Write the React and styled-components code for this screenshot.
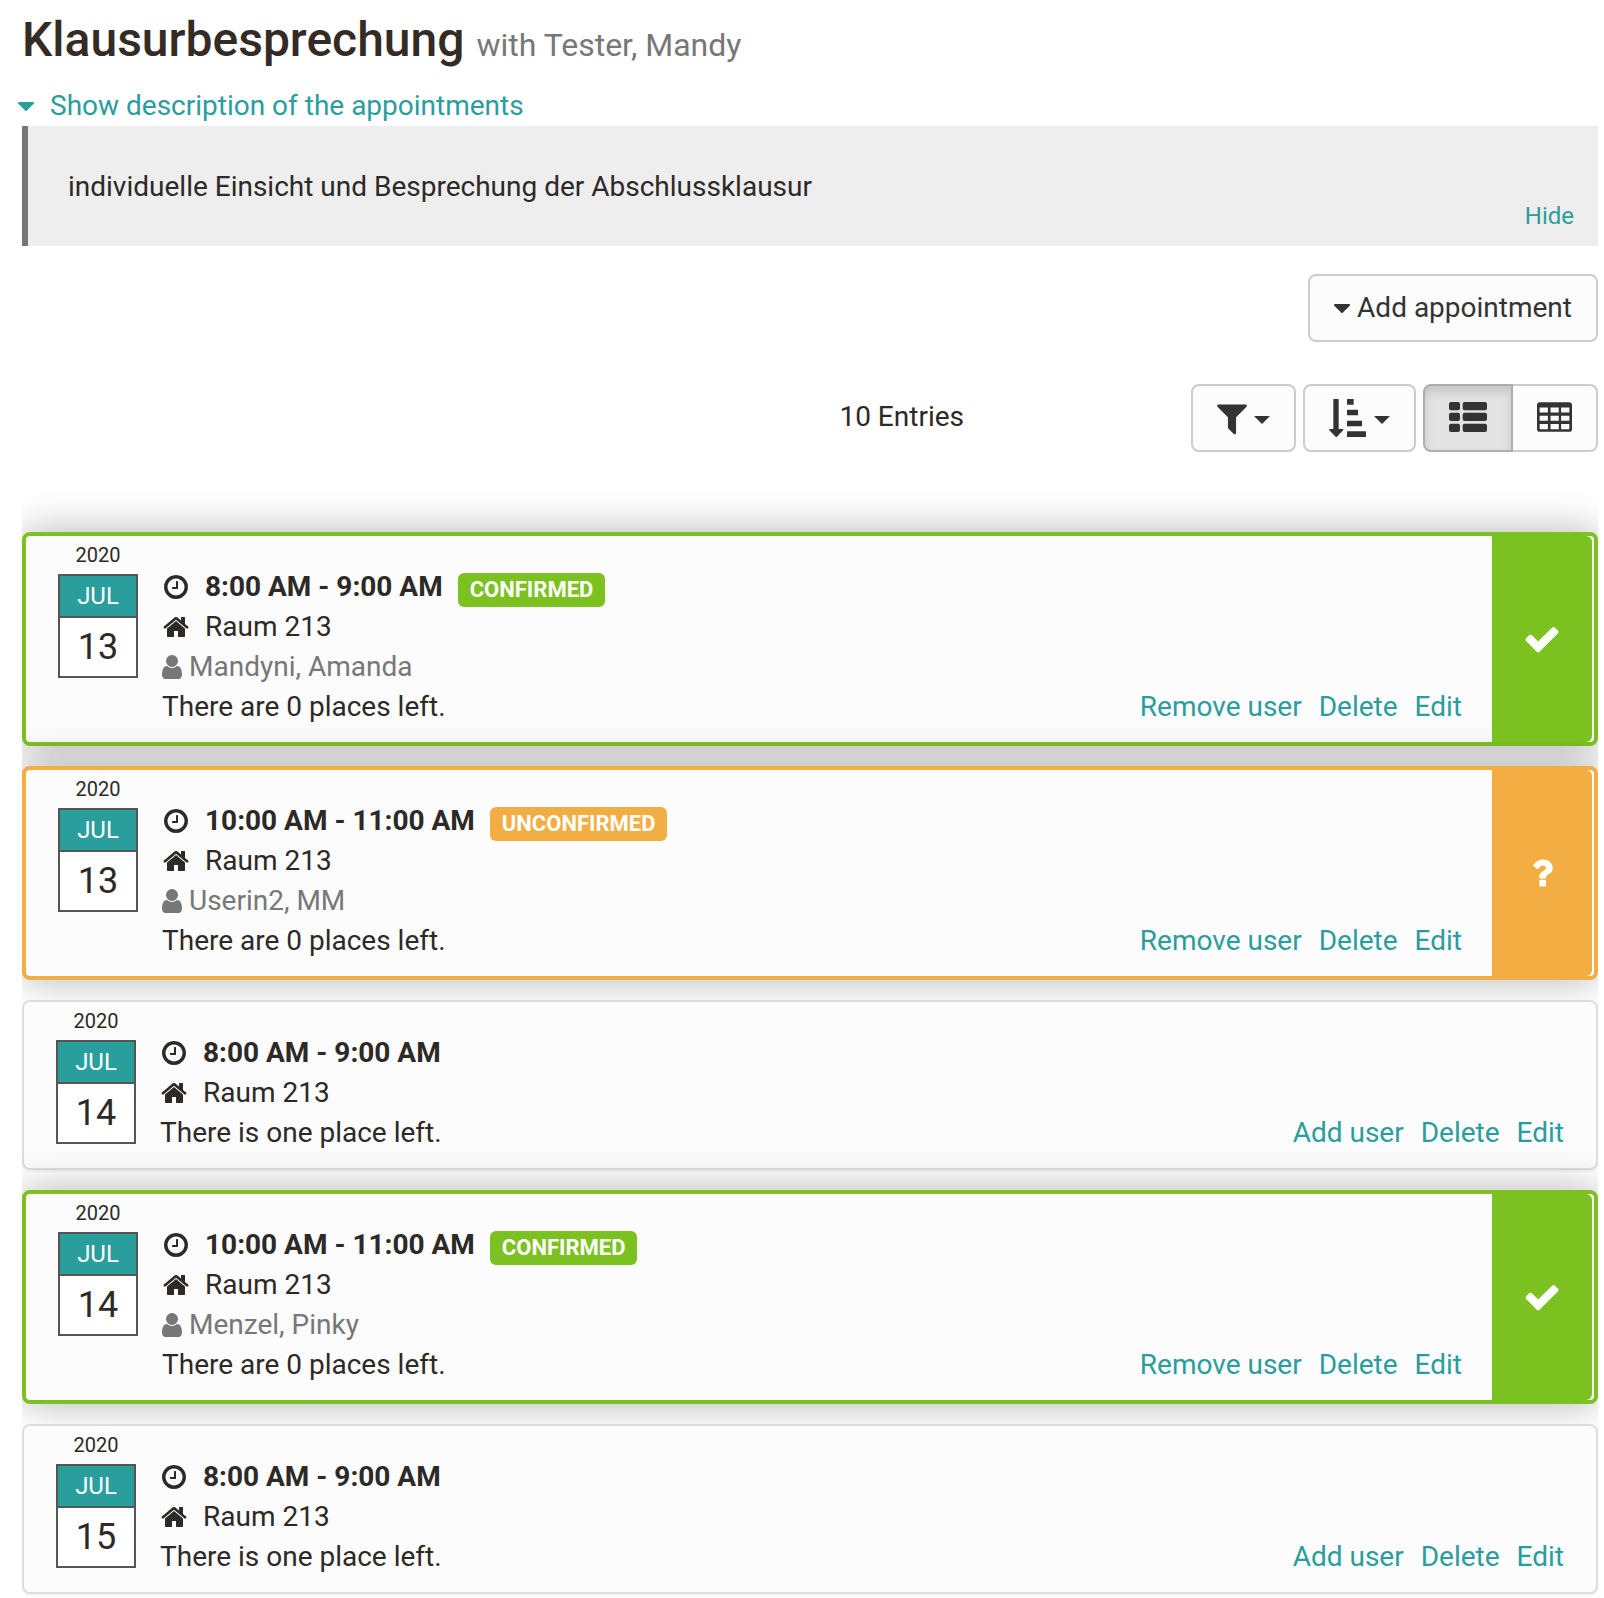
import React, { useState } from "react";
import styled, { createGlobalStyle, css } from "styled-components";

const color = {
  text: "#2d2926",
  title: "#352b25",
  control: "#333333",
  muted: "#777777",
  link: "#2a9d9d",
  confirmed: "#7bc221",
  unconfirmed: "#f2ae43",
  surface: "#fcfcfc",
};

const GlobalStyle = createGlobalStyle`
  *, *::before, *::after { box-sizing: border-box; }
  body {
    margin: 0;
    background: #ffffff;
    color: ${color.text};
    font-family: Roboto, "Liberation Sans", sans-serif;
    font-size: 28px;
    line-height: 40px;
  }
  svg { display: block; flex: none; fill: currentColor; }
`;

/* ---------- icons ---------- */

const Glyph = ({ d, size = 28, left = 0, span = 1792, width }) => (
  <svg width={width || size} height={size} viewBox={`${left} 0 ${span} 1792`} aria-hidden="true">
    <path d={d} />
  </svg>
);

const paths = {
  clock:
    "M1024 544v448q0 14-9 23t-23 9h-320q-14 0-23-9t-9-23v-64q0-14 9-23t23-9h224v-352q0-14 9-23t23-9h64q14 0 23 9t9 23zm416 352q0-148-73-273t-198-198-273-73-273 73-198 198-73 273 73 273 198 198 273 73 273-73 198-198 73-273zm224 0q0 209-103 385.5t-279.5 279.5-385.5 103-385.5-103-279.5-279.5-103-385.5 103-385.5 279.5-279.5 385.5-103 385.5 103 279.5 279.5 103 385.5z",
  home:
    "M1472 992v480q0 26-19 45t-45 19h-384v-384h-256v384h-384q-26 0-45-19t-19-45v-480q0-1 .5-3t.5-3l575-474 575 474q1 2 1 6zm223-69l-62 74q-8 9-21 11h-3q-13 0-21-7l-692-577-692 577q-12 8-24 7-13-2-21-11l-62-74q-8-10-7-23.5t11-21.5l719-599q32-26 76-26t76 26l244 204v-195q0-14 9-23t23-9h192q14 0 23 9t9 23v408l219 182q10 8 11 21.5t-7 23.5z",
  user:
    "M1536 1399q0 109-62.5 187t-150.5 78h-854q-88 0-150.5-78t-62.5-187q0-85 8.5-160.5t31.5-152 58.5-131 94-89 134.5-34.5q131 128 313 128t313-128q76 0 134.5 34.5t94 89 58.5 131 31.5 152 8.5 160.5zm-256-887q0 159-112.5 271.5t-271.5 112.5-271.5-112.5-112.5-271.5 112.5-271.5 271.5-112.5 271.5 112.5 112.5 271.5z",
  filter:
    "M1595 295q17 41-14 70l-493 493v742q0 42-39 59-13 5-25 5-27 0-45-19l-256-256q-19-19-19-45v-486l-493-493q-31-29-14-70 17-39 59-39h1280q42 0 59 39z",
  check:
    "M1671 566q0 40-28 68l-724 724-136 136q-28 28-68 28t-68-28l-136-136-362-362q-28-28-28-68t28-68l136-136q28-28 68-28t68 28l294 295 656-657q28-28 68-28t68 28l136 136q28 28 28 68z",
  question:
    "M1088 1256v240q0 16-12 28t-28 12h-240q-16 0-28-12t-12-28v-240q0-16 12-28t28-12h240q16 0 28 12t12 28zm316-600q0 54-15.5 101t-35 76.5-55 59.5-57.5 43.5-61 35.5q-41 23-68.5 65t-27.5 67q0 17-12 32.5t-28 15.5h-240q-15 0-25.5-18.5t-10.5-37.5v-45q0-83 65-156.5t143-108.5q59-27 84-56t25-76q0-42-46.5-74t-107.5-32q-65 0-108 29-35 25-107 115-13 16-31 16-12 0-25-8l-164-125q-13-10-15.5-25t5.5-28q160-266 464-266 80 0 161 31t146 83 106 127.5 41 158.5z",
  caret:
    "M1408 704q0 26-19 45l-448 448q-19 19-45 19t-45-19l-448-448q-19-19-19-45t19-45 45-19h896q26 0 45 19t19 45z",
};

const CaretIcon = () => <Glyph d={paths.caret} left={384} span={1024} width={16} />;
const UserIcon = () => <Glyph d={paths.user} left={256} span={1280} width={20} />;
const FilterIcon = () => <Glyph d={paths.filter} size={38} left={192} span={1408} width={30} />;

const SortIcon = () => (
  <svg width="37" height="38" viewBox="0 0 111 114" aria-hidden="true">
    <path d="M15 0h12q2 0 2 2v88h12q3 0 2 3L24 113q-2 2-4 0L1 94q-2-4 2-4h10V2q0-2 2-2z" />
    <rect x="54" y="0" width="20" height="17" rx="1" />
    <rect x="54" y="32" width="33" height="17" rx="1" />
    <rect x="54" y="65" width="45" height="17" rx="1" />
    <rect x="54" y="97" width="57" height="17" rx="1" />
  </svg>
);

const ListIcon = () => (
  <svg width="38" height="32" viewBox="0 0 114 96" aria-hidden="true">
    {[0, 32, 65].map((y) => (
      <React.Fragment key={y}>
        <rect x="0" y={y} width="33" height="25" rx="6" />
        <rect x="41" y={y} width="73" height="25" rx="6" />
      </React.Fragment>
    ))}
  </svg>
);

const TableIcon = () => (
  <svg width="35" height="32" viewBox="0 0 106 96" aria-hidden="true">
    <path
      fillRule="evenodd"
      d="M9 0h88q9 0 9 9v72q0 9-9 9H9q-9 0-9-9V9q0-9 9-9z
         M8 16v15h25V16z M41 16v15h25V16z M73 16v15h25V16z
         M8 41v15h25V41z M41 41v15h25V41z M73 41v15h25V41z
         M8 66v14q0 2 2 2h23V66z M41 66v16h25V66z M73 66v16h23q2 0 2-2V66z"
    />
  </svg>
);

/* ---------- page ---------- */

const Page = styled.main`
  padding: 14px 6px 4px 22px;
`;

const Title = styled.h1`
  margin: 0 0 20px;
  color: ${color.title};
  font-size: 48px;
  line-height: 52px;
  font-weight: 500;

  small {
    color: ${color.muted};
    font-size: 32px;
    line-height: 32px;
    font-weight: 400;
  }
`;

const Toggle = styled.button`
  display: flex;
  align-items: center;
  gap: 16px;
  margin: 0 0 0 -4px;
  padding: 0;
  border: 0;
  background: none;
  color: ${color.link};
  font: inherit;
  cursor: pointer;
`;

const Description = styled.section`
  display: flex;
  justify-content: space-between;
  padding: 41px 24px 10px 40px;
  border-left: 6px solid ${color.muted};
  background: #eeeeee;

  p {
    margin: 0 0 29px;
  }
`;

const Link = styled.a`
  color: ${color.link};
  text-decoration: none;
`;

const HideLink = styled(Link)`
  align-self: flex-end;
  font-size: 24px;
`;

const Button = styled.button`
  display: flex;
  align-items: center;
  gap: ${(p) => p.$gap || 8}px;
  height: 68px;
  padding: 0 24px;
  border: 2px solid #cccccc;
  border-radius: 8px;
  background: ${color.surface};
  color: ${color.control};
  font: inherit;
  cursor: pointer;

  ${(p) =>
    p.$active &&
    css`
      z-index: 1;
      border-color: #adadad;
      background: #e3e3e3;
      box-shadow: inset 0 6px 10px rgba(0, 0, 0, 0.125);
    `}
`;

const SmallCaret = styled.span`
  margin-top: 4px;
  border-top: 8px solid currentColor;
  border-right: 8px solid transparent;
  border-left: 8px solid transparent;
`;

const AddRow = styled.div`
  display: flex;
  justify-content: flex-end;
  margin: 28px 0 42px;
`;

const Toolbar = styled.div`
  display: flex;
  align-items: center;
  justify-content: flex-end;
  margin-bottom: 40px;
`;

const Count = styled.span`
  margin-right: 227px;
  padding-bottom: 2px;
`;

const Tools = styled.div`
  display: flex;
  gap: 7px;
`;

const ButtonGroup = styled.div`
  display: flex;

  ${Button}:first-child {
    border-radius: 8px 0 0 8px;
  }
  ${Button}:last-child {
    margin-left: -2px;
    border-radius: 0 8px 8px 0;
  }
`;

/* ---------- appointments ---------- */

const List = styled.ul`
  margin: 0;
  padding: 40px 0 4px;
  overflow: hidden;
  list-style: none;
`;

const Card = styled.li`
  display: flex;
  border: 2px solid #dddddd;
  border-radius: 8px;
  background: ${color.surface};
  box-shadow: 0 2px 2px rgba(0, 0, 0, 0.05);

  & + & {
    margin-top: 20px;
  }

  ${(p) =>
    p.$status &&
    css`
      border: 4px solid ${color[p.$status]};
      box-shadow: 0 0 40px rgba(0, 0, 0, 0.3);
    `}
`;

const DateColumn = styled.div`
  width: 80px;
  margin: 0 24px 0 32px;
  text-align: center;
`;

const Year = styled.div`
  font-size: 20px;
  line-height: 38px;
`;

const Sheet = styled.div`
  border: 2px solid #555555;
  background: #ffffff;
`;

const Month = styled.div`
  border-bottom: 2px solid #555555;
  background: ${color.link};
  color: #ffffff;
  font-size: 24px;
`;

const Day = styled.div`
  font-size: 36px;
  line-height: 58px;
`;

const Details = styled.div`
  flex: 1;
  padding: 31px 0 15px;
`;

const Line = styled.div`
  display: flex;
  align-items: center;
  gap: 15px;
  height: 40px;
`;

const Time = styled.strong`
  font-weight: 700;
`;

const Badge = styled.span`
  align-self: flex-end;
  padding: 0 12px;
  border-radius: 6px;
  background: ${(p) => color[p.$status]};
  color: #ffffff;
  font-size: 22px;
  line-height: 34px;
  font-weight: 700;
  text-transform: uppercase;
`;

const Person = styled(Line)`
  gap: 7px;
  color: ${color.muted};
`;

const Actions = styled.nav`
  display: flex;
  align-self: flex-end;
  gap: 17px;
  padding: 0 ${(p) => (p.$status ? 30 : 32)}px 15px 0;
`;

const StatusPanel = styled.div`
  display: flex;
  align-items: center;
  justify-content: center;
  width: 100px;
  margin-right: 2px;
  border-radius: 0 6px 6px 0;
  background: ${(p) => color[p.$status]};
  color: #ffffff;
`;

const appointments = [
  { day: 13, time: "8:00 AM - 9:00 AM", status: "confirmed", person: "Mandyni, Amanda" },
  { day: 13, time: "10:00 AM - 11:00 AM", status: "unconfirmed", person: "Userin2, MM" },
  { day: 14, time: "8:00 AM - 9:00 AM" },
  { day: 14, time: "10:00 AM - 11:00 AM", status: "confirmed", person: "Menzel, Pinky" },
  { day: 15, time: "8:00 AM - 9:00 AM" },
];

function Appointment({ day, time, status, person }) {
  return (
    <Card $status={status}>
      <DateColumn>
        <Year>2020</Year>
        <Sheet>
          <Month>JUL</Month>
          <Day>{day}</Day>
        </Sheet>
      </DateColumn>
      <Details>
        <Line>
          <Glyph d={paths.clock} />
          <Time>{time}</Time>
          {status && <Badge $status={status}>{status}</Badge>}
        </Line>
        <Line>
          <Glyph d={paths.home} />
          Raum 213
        </Line>
        {person && (
          <Person>
            <UserIcon />
            {person}
          </Person>
        )}
        <Line>{person ? "There are 0 places left." : "There is one place left."}</Line>
      </Details>
      <Actions $status={status}>
        <Link href="#user">{person ? "Remove user" : "Add user"}</Link>
        <Link href="#delete">Delete</Link>
        <Link href="#edit">Edit</Link>
      </Actions>
      {status && (
        <StatusPanel $status={status}>
          <Glyph d={status === "confirmed" ? paths.check : paths.question} size={38} />
        </StatusPanel>
      )}
    </Card>
  );
}

export default function App() {
  const [open, setOpen] = useState(true);

  return (
    <>
      <GlobalStyle />
      <Page>
        <Title>
          Klausurbesprechung <small>with Tester, Mandy</small>
        </Title>
        <Toggle type="button" aria-expanded={open} onClick={() => setOpen(!open)}>
          <CaretIcon />
          Show description of the appointments
        </Toggle>
        {open && (
          <Description>
            <p>individuelle Einsicht und Besprechung der Abschlussklausur</p>
            <HideLink
              href="#hide"
              onClick={(e) => {
                e.preventDefault();
                setOpen(false);
              }}
            >
              Hide
            </HideLink>
          </Description>
        )}
        <AddRow>
          <Button type="button" $gap={7}>
            <CaretIcon />
            Add appointment
          </Button>
        </AddRow>
        <Toolbar>
          <Count>10 Entries</Count>
          <Tools>
            <Button type="button" $gap={7} aria-label="Filter">
              <FilterIcon />
              <SmallCaret />
            </Button>
            <Button type="button" $gap={8} aria-label="Sort">
              <SortIcon />
              <SmallCaret />
            </Button>
            <ButtonGroup>
              <Button type="button" $active aria-pressed="true" aria-label="List view">
                <ListIcon />
              </Button>
              <Button type="button" aria-pressed="false" aria-label="Table view">
                <TableIcon />
              </Button>
            </ButtonGroup>
          </Tools>
        </Toolbar>
        <List>
          {appointments.map((a, i) => (
            <Appointment key={i} {...a} />
          ))}
        </List>
      </Page>
    </>
  );
}
